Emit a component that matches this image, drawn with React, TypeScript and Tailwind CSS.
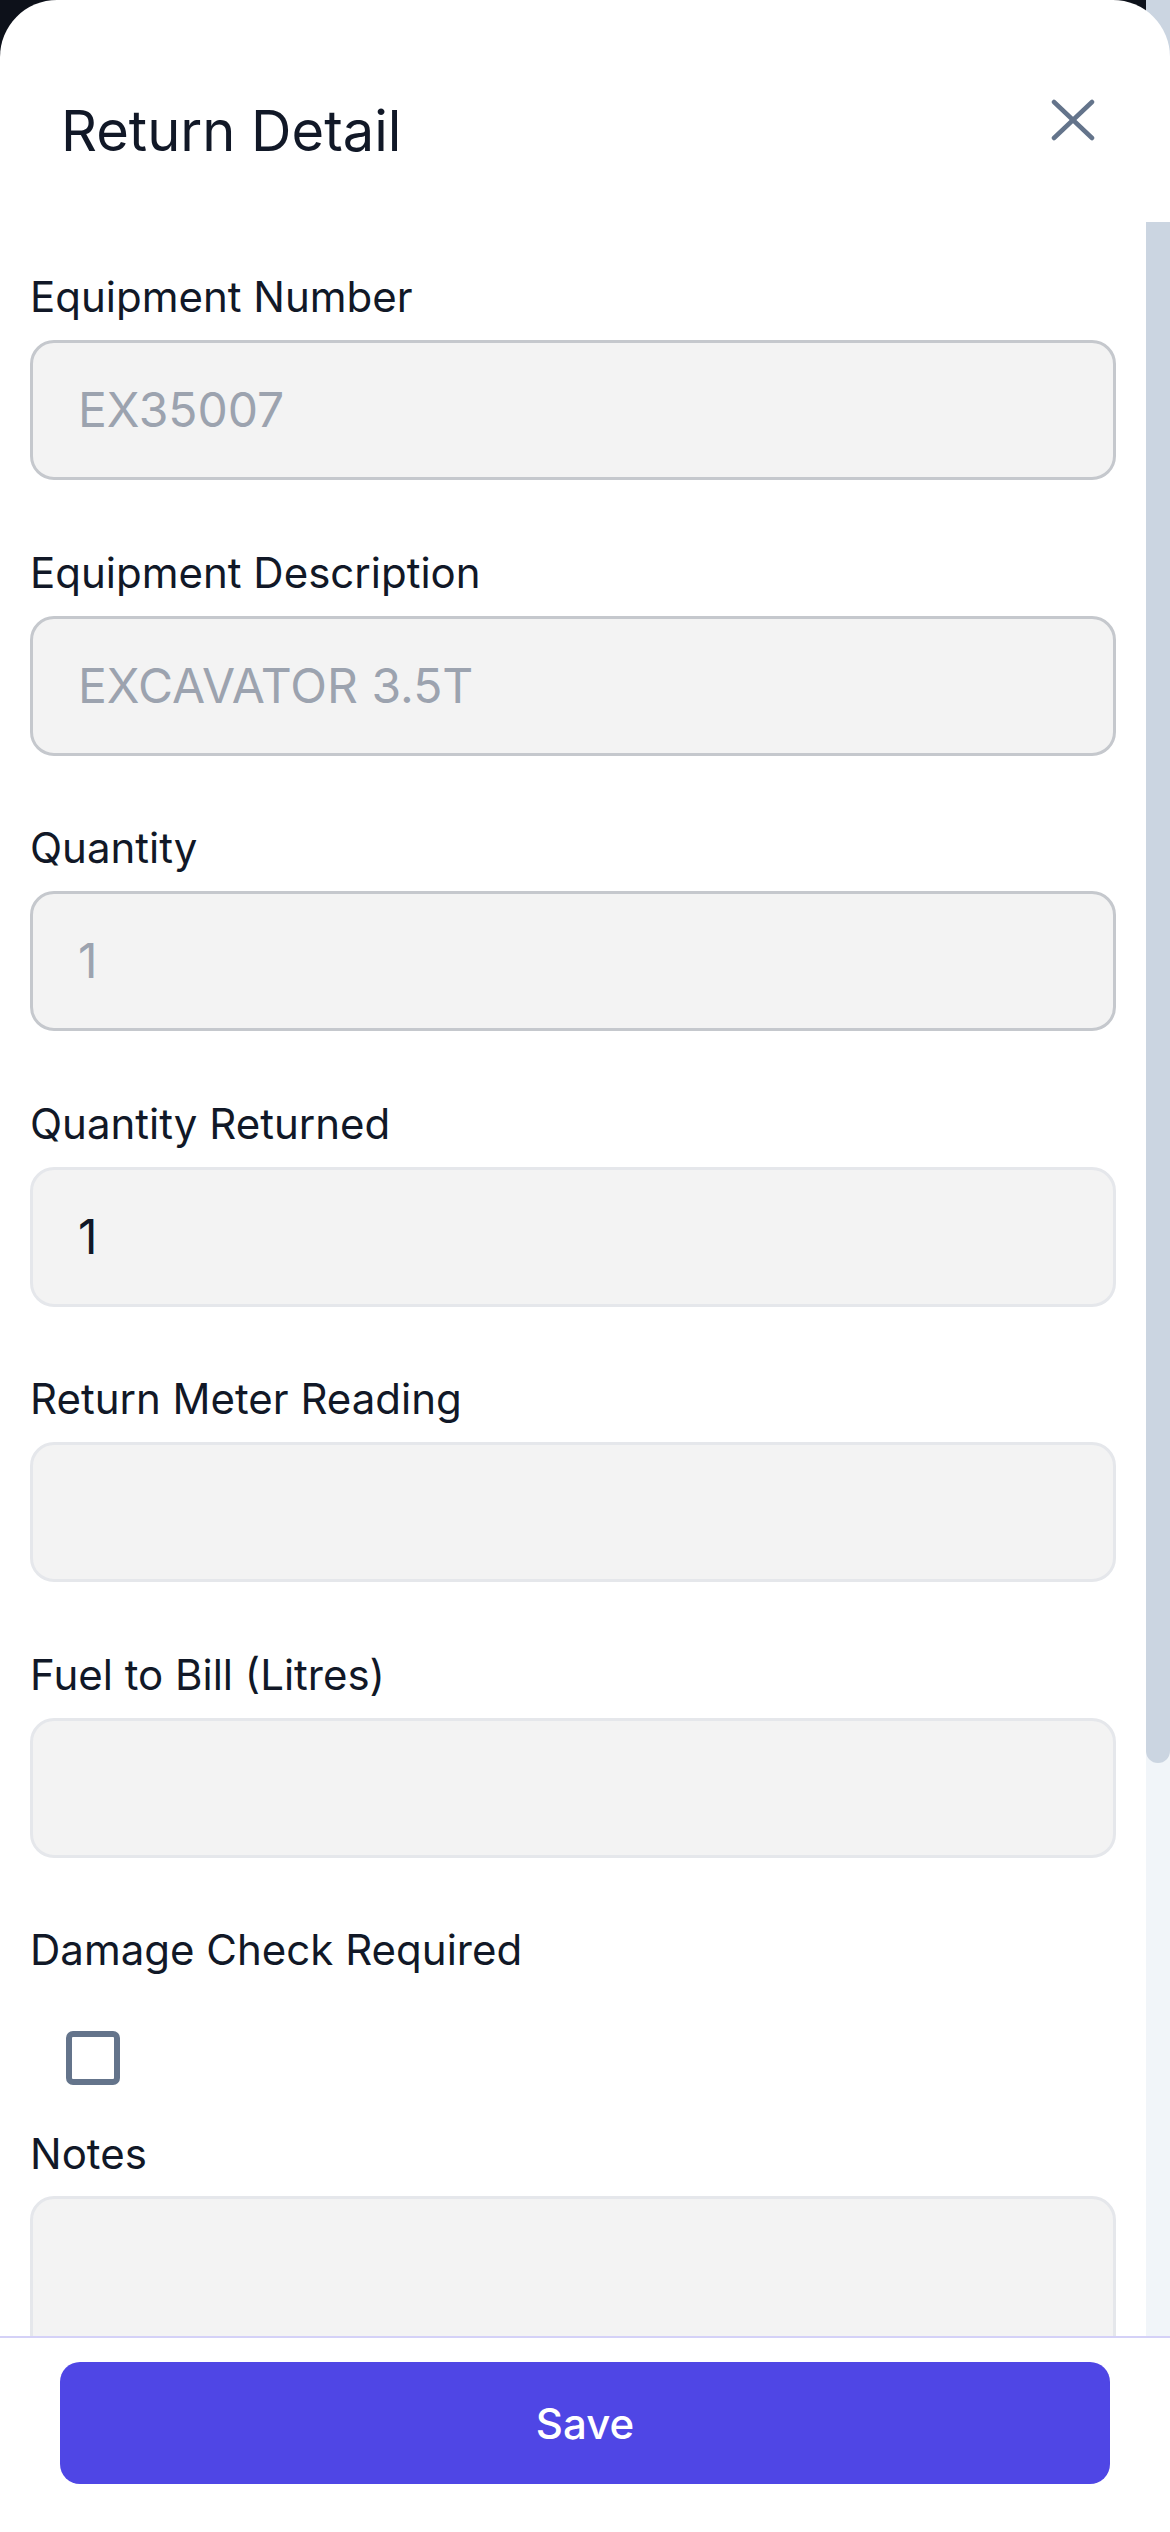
const fields = [
  { label: "Equipment Number", value: "EX35007", disabled: true },
  { label: "Equipment Description", value: "EXCAVATOR 3.5T", disabled: true },
  { label: "Quantity", value: "1", disabled: true },
  { label: "Quantity Returned", value: "1", disabled: false },
  { label: "Return Meter Reading", value: "", disabled: false },
  { label: "Fuel to Bill (Litres)", value: "", disabled: false },
];

const Field = ({ label, value, disabled }: { label: string; value: string; disabled: boolean }) => (
  <div className="mb-[62.5px]">
    <label className="block text-[42px] leading-[60px] text-[#111827] mb-[13px]">{label}</label>
    <div
      className={
        disabled
          ? "h-[140px] flex items-center rounded-[24px] border-[3px] border-[#c5c8cd] bg-[#f3f3f3] pl-[45px] text-[48px] text-[#9ca3af]"
          : "h-[140px] flex items-center rounded-[24px] border-[3px] border-[#e5e7eb] bg-[#f3f3f3] pl-[45px] text-[48px] text-[#111827]"
      }
    >
      {value}
    </div>
  </div>
);

export default function App() {
  return (
    <div className="relative w-[1170px] h-[2532px] overflow-hidden bg-[#0d111a] font-['Inter',sans-serif]">
      {/* page scrollbar peeking behind the sheet corner */}
      <div className="absolute right-0 top-0 w-[24px] h-[80px] bg-[#cbd5e1]" />

      <div className="relative flex flex-col h-full bg-white rounded-t-[57px] overflow-hidden">
        {/* header */}
        <div className="h-[222px] shrink-0 flex items-start justify-between pl-[61px] pr-[75px]">
          <h1 className="pt-[103px] text-[56px] leading-none font-normal text-[#111827]">Return Detail</h1>
          <button className="mt-[99px] w-[44px] h-[42px] text-[#64748b]">
            <svg viewBox="0 0 44 42" width="44" height="42" fill="none" stroke="currentColor" strokeWidth="4.5" strokeLinecap="round">
              <path d="M3 3 L41 39" />
              <path d="M41 3 L3 39" />
            </svg>
          </button>
        </div>

        {/* scroll body */}
        <div className="flex flex-1 min-h-0">
          <div className="flex-1 overflow-hidden px-[30px] pt-[45px]">
            {fields.map((f) => (
              <Field key={f.label} {...f} />
            ))}

            <div>
              <label className="block text-[42px] leading-[60px] text-[#111827]">Damage Check Required</label>
              <div className="mt-[51px] ml-[36px] w-[54px] h-[54px] rounded-[7px] border-[6px] border-[#64748b] bg-white" />
            </div>

            <div className="mt-[39px]">
              <label className="block text-[42px] leading-[60px] text-[#111827] mb-[12px]">Notes</label>
              <div className="h-[300px] rounded-[24px] border-[3px] border-[#e5e7eb] bg-[#f3f3f3]" />
            </div>
          </div>

          {/* scrollbar */}
          <div className="w-[24px] shrink-0 bg-[#f1f5f9]">
            <div className="h-[1541px] bg-[#cbd5e1] rounded-b-[12px]" />
          </div>
        </div>

        {/* footer */}
        <div className="h-[196px] shrink-0 border-t-[2px] border-[#d4d1f7] px-[60px] pt-[24px] bg-white">
          <button className="w-full h-[122px] rounded-[20px] bg-[#4f46e5] text-white text-[42px] font-medium">
            Save
          </button>
        </div>
      </div>
    </div>
  );
}
